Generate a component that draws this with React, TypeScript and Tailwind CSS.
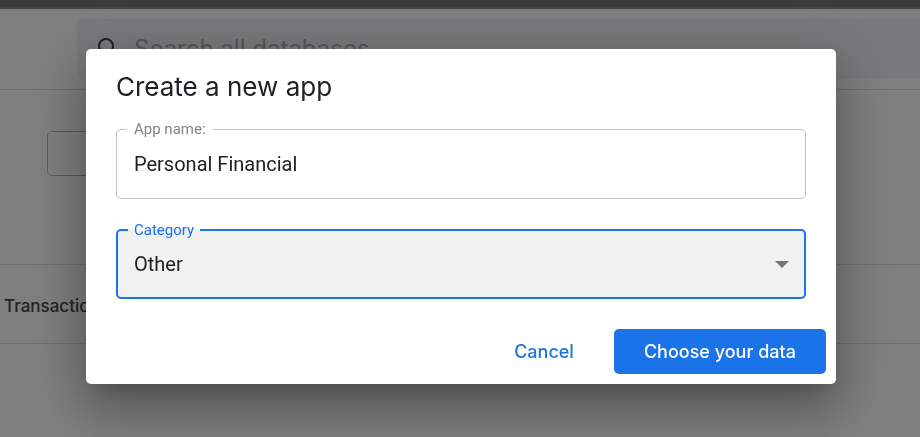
import { useState } from "react";

function BackgroundPage() {
  return (
    <div className="flex min-h-screen flex-col bg-white" aria-hidden="true">
      <div className="h-[9px] border-b-2 border-[#8a8a8a] bg-[#767676]" />
      <header className="flex h-[81px] items-start border-b border-[#dadce0] pt-[10px] pl-[77px]">
        <label className="flex h-[60px] flex-1 items-center gap-4 rounded-l-[5px] bg-[#f1f3f4] pl-[17px]">
          <svg viewBox="0 0 24 24" className="size-6 fill-none stroke-[#3c4043] stroke-2">
            <circle cx="12" cy="9" r="7" />
            <path d="M17 14l6 6" />
          </svg>
          <input
            type="search"
            tabIndex={-1}
            placeholder="Search all databases"
            className="flex-1 bg-transparent font-[Inter,sans-serif] text-[24px] leading-8 outline-none placeholder:text-[#a8abaf]"
          />
        </label>
      </header>
      <section className="h-[175px] border-b border-[#dadce0] pt-[41px] pl-[47px]">
        <button type="button" tabIndex={-1} aria-label="Filter" className="h-[45px] w-[160px] rounded-[5px] border border-[#b0b3b7]" />
      </section>
      <div className="flex h-[79px] items-center border-b border-[#dadce0] px-1 pt-[6px]">
        <span className="font-[Inter,sans-serif] text-[17px] font-medium text-[#46494d]">Transactions</span>
      </div>
    </div>
  );
}

export default function App() {
  const [name, setName] = useState("Personal Financial");
  const [category, setCategory] = useState("Other");

  return (
    <div className="relative overflow-hidden font-[Roboto,sans-serif]">
      <BackgroundPage />
      <div className="fixed inset-0 flex items-start bg-black/50 pt-[49px] pr-[84px] pl-[86px]">
        <form
          role="dialog"
          aria-labelledby="dialog-title"
          onSubmit={(e) => e.preventDefault()}
          className="w-full rounded-[5px] bg-white pb-[10px] shadow-[0_14px_19px_-9px_rgba(0,0,0,0.2),0_30px_48px_4px_rgba(0,0,0,0.18),0_11px_58px_10px_rgba(0,0,0,0.16)]"
        >
          <div className="flex flex-col gap-[22px] px-[30px] pt-5">
            <h1 id="dialog-title" className="-mb-[9px] font-[Inter,sans-serif] text-[26px] leading-9 text-[#202124]">
              Create a new app
            </h1>
            <fieldset className="min-w-0 rounded-[5px] border border-[#c2c2c2]">
              <legend className="ml-[10px] h-[22px] px-[7px] text-[15px] leading-[22px] text-[#80868b]">
                <label htmlFor="app-name">App name:</label>
              </legend>
              <input
                id="app-name"
                value={name}
                onChange={(e) => setName(e.target.value)}
                className="block h-[58px] w-full bg-transparent px-[17px] pb-[11px] text-[20px] text-[#202124] outline-none"
              />
            </fieldset>
            <fieldset className="relative -mt-[2px] min-w-0 rounded-[5px] border-2 border-[#1a73e8] bg-[#f1f1f1]">
              <legend className="ml-[10px] h-[22px] px-[6px] text-[15px] leading-[22px] text-[#1a73e8]">
                <label htmlFor="category">Category</label>
              </legend>
              <select
                id="category"
                value={category}
                onChange={(e) => setCategory(e.target.value)}
                className="block h-14 w-full appearance-none bg-transparent px-4 pb-[11px] text-[20px] text-[#202124] outline-none"
              >
                <option>Other</option>
              </select>
              <svg viewBox="0 0 14 7" className="pointer-events-none absolute right-[15px] bottom-[29px] h-[7px] w-[14px] fill-[#757575]">
                <path d="M0 0h14L7 7z" />
              </svg>
            </fieldset>
          </div>
          <div className="mt-[30px] flex justify-end gap-[10px] px-[10px] font-[Inter,sans-serif] text-[18px] font-medium">
            <button type="button" className="h-[45px] rounded-[5px] px-[30px] text-[#1a73e8]">
              Cancel
            </button>
            <button type="submit" className="h-[45px] rounded-[5px] bg-[#1a73e8] px-[30px] text-white">
              Choose your data
            </button>
          </div>
        </form>
      </div>
    </div>
  );
}
